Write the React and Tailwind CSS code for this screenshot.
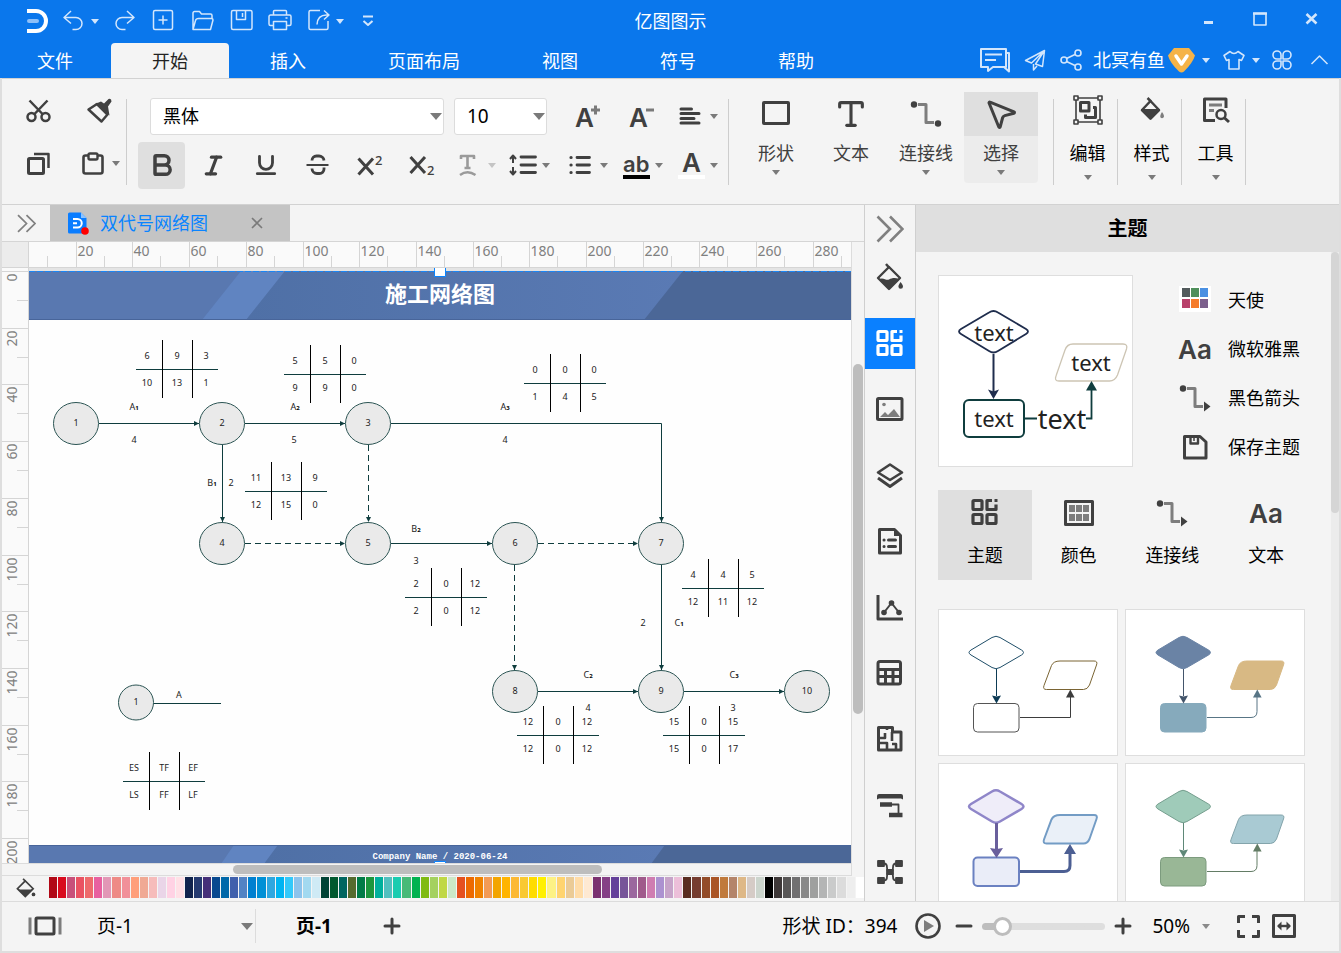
import React, { useState } from 'react';
import {
  Bold,
  Italic,
  Underline,
  Type,
  MousePointer2,
  Minus,
  Plus
} from 'lucide-react';

const Icon = ({ w = 24, h = 24, sw = 2, className = '', children }) => (
  <svg
    width={w}
    height={h}
    viewBox={`0 0 ${w} ${h}`}
    fill="none"
    stroke="currentColor"
    strokeWidth={sw}
    strokeLinejoin="round"
    className={`shrink-0 overflow-visible ${className}`}
    aria-hidden="true"
  >
    {children}
  </svg>
);

const Caret = ({ className = 'text-[#7a7a7a]' }) => (
  <Icon w={8} h={5} className={className}>
    <path d="M0 0h8L4 5z" fill="currentColor" stroke="none" />
  </Icon>
);

const BigCaret = ({ className = '' }) => (
  <Icon w={12} h={7} className={`text-[#7a7a7a] ${className}`}>
    <path d="M0 0h12L6 7z" fill="currentColor" stroke="none" />
  </Icon>
);

/* ---------- shared icons ---------- */

const BucketIcon = () => (
  <Icon w={28} h={28} sw={2}>
    <path d="M10 0l3 3.500" strokeWidth="2.500" />
    <path d="M13 3L2 14l11 11 11-11z" strokeWidth="2.400" />
    <path d="M3 15c5-2 7 2 10 .5s6-2 10-.5L13 25z" fill="currentColor" stroke="none" />
    <path d="M24.500 18c1.500 2 2.500 3 2.500 4.500a2.300 2.300 0 0 1-4.600 0c0-1.500 1-2.500 2.100-4.500z" fill="currentColor" stroke="none" />
  </Icon>
);

const ThemeIcon = () => (
  <Icon w={28} h={28} sw={3.2}>
    <rect x="2" y="1.500" width="9" height="9" rx="1" />
    <rect x="2" y="15.500" width="9" height="9" rx="1" />
    <rect x="16" y="15.500" width="9" height="9" rx="1" />
    <path d="M21 1.500h-5v9h9v-5" />
    <path d="M23.500 0h3v3h-3z" fill="currentColor" stroke="none" />
  </Icon>
);

const ConnectorIcon = ({ arrow = false }) => (
  <Icon w={32} h={28}>
    <circle cx="4" cy="4.500" r="3.200" fill="currentColor" stroke="none" />
    <path d="M8 4.500h8v18h8" stroke="#7d7d7d" strokeWidth="3" />
    {arrow ? (
      <path d="M25 17.500l6.500 5-6.500 5z" fill="currentColor" stroke="none" />
    ) : (
      <circle cx="28" cy="23.500" r="3.200" fill="currentColor" stroke="none" />
    )}
  </Icon>
);

const AaIcon = () => (
  <Icon w={32} h={26}>
    <text x="-1" y="23" fill="currentColor" stroke="none" className="font-['Inter',sans-serif] text-[26px] font-semibold">
      Aa
    </text>
  </Icon>
);

const ChevronsIcon = ({ size = 28 }) => (
  <svg width={size} height={size} viewBox="0 0 28 28" fill="none" stroke="#808080" strokeWidth="2.600">
    <path d="M1.500 1.500L14 14 1.500 26.500M14 1.500L26.500 14 14 26.500" />
  </svg>
);

/* ---------- title bar ---------- */

const QuickAccess = () => (
  <div className="flex h-[42px] items-center pl-[26px] text-[#d3e6fc]">
    <Icon w={24} h={26}>
      <path d="M1 3h9a10 10 0 0 1 0 20H1" stroke="#fff" strokeWidth="4" />
      <path d="M3 13h8" stroke="#8fc0f8" strokeWidth="4" strokeLinecap="round" />
    </Icon>
    <button type="button" aria-label="撤销" className="ml-[11px] flex items-center gap-[6px]">
      <Icon sw={1.5}>
        <path d="M10 2L3 8.500l7 6M3.500 8.500H15a6 6 0 0 1 0 12h-3.500" />
      </Icon>
      <Caret className="text-[#d3e6fc]" />
    </button>
    <button type="button" aria-label="重做" className="ml-[14px]">
      <Icon sw={1.5}>
        <path d="M14 2l7 6.500-7 6M20.500 8.500H9a6 6 0 0 0 0 12h3.500" />
      </Icon>
    </button>
    <div className="ml-[14px] flex items-center gap-[15px]">
      <button type="button" aria-label="新建">
        <Icon sw={1.5}>
          <rect x="2.500" y="1.500" width="19" height="19" rx="1.500" />
          <path d="M12 6.500v9M7.500 11h9" />
        </Icon>
      </button>
      <button type="button" aria-label="打开">
        <Icon sw={1.5}>
          <path d="M3 20.500V4a1.500 1.500 0 0 1 1.500-1.500h5l2 2.500h9a1.500 1.500 0 0 1 1.500 1.500v3M3 20.500h17.500l2.500-9.500q0-1.500-1.500-1.500H8.500q-2.500 0-3 2z" />
        </Icon>
      </button>
      <button type="button" aria-label="保存">
        <Icon sw={1.5}>
          <path d="M4 1.500h17.500a1.500 1.500 0 0 1 1.500 1.500v16a1.500 1.500 0 0 1-1.500 1.500H4A1.500 1.500 0 0 1 2.500 19V3A1.500 1.500 0 0 1 4 1.500zM7.500 2v8.500h9V2M13.500 4v4" />
        </Icon>
      </button>
      <button type="button" aria-label="打印">
        <Icon sw={1.5}>
          <path d="M5.500 6V2.500a1 1 0 0 1 1-1h11a1 1 0 0 1 1 1V6M5.500 16.500H2.500a1.500 1.500 0 0 1-1.500-1.500V7.500A1.500 1.500 0 0 1 2.500 6h19A1.500 1.500 0 0 1 23 7.500v7.500a1.500 1.500 0 0 1-1.500 1.500h-3M5.500 12.500h13v8h-13zM17.500 9h2" />
        </Icon>
      </button>
      <button type="button" aria-label="导出" className="flex items-center gap-[5px]">
        <Icon sw={1.5}>
          <path d="M13 1.500H3.500A1.500 1.500 0 0 0 2 3v16a1.500 1.500 0 0 0 1.500 1.500h16a1.500 1.500 0 0 0 1.500-1.500V12M17 1.500L22 6l-5 4.500M21.500 6h-2q-9 0-9.500 9.500" />
        </Icon>
        <Caret className="text-[#d3e6fc]" />
      </button>
    </div>
    <button type="button" aria-label="更多" className="ml-[18px]">
      <Icon w={12} h={12} sw={2}>
        <path d="M1 1.500h10M1.500 6L6 10l4.500-4" />
      </Icon>
    </button>
  </div>
);

const menuTabs = ['插入', '页面布局', '视图', '符号', '帮助'];

const Header = () => (
  <header className="bg-[#0a77ec] text-white">
    <div className="grid grid-cols-[1fr_auto_1fr] items-center">
      <QuickAccess />
      <h1 className="text-lg">亿图图示</h1>
      <div className="flex items-center justify-end gap-[38px] pr-[23px] pb-1 text-[#d3e6fc]">
        <button type="button" aria-label="最小化">
          <Icon w={13} h={14}>
            <path d="M2 10.500h9" strokeWidth="3" />
          </Icon>
        </button>
        <button type="button" aria-label="最大化">
          <Icon w={14} h={14}>
            <path d="M1 1.500h12v11.500H1z" strokeWidth="1.600" />
            <path d="M0 1.500h14" strokeWidth="2.500" />
          </Icon>
        </button>
        <button type="button" aria-label="关闭">
          <Icon w={13} h={14}>
            <path d="M1.500 2l10 9.500M11.500 2l-10 9.500" strokeWidth="2.600" />
          </Icon>
        </button>
      </div>
    </div>
    <div className="flex h-9 items-end justify-between">
      <nav className="flex text-lg">
        <button type="button" className="h-[35px] w-[111px] px-[37px] text-left">文件</button>
        <button type="button" className="h-[35px] rounded-t-sm bg-[#f4f4f4] px-[41px] text-[#222]">开始</button>
        {menuTabs.map((tab) => (
          <button type="button" key={tab} className="h-[35px] px-[41px]">{tab}</button>
        ))}
      </nav>
      <div className="flex h-9 items-center pr-[13px] text-[#d3e6fc]">
        <button type="button" aria-label="消息">
          <Icon w={31} h={26}>
            <path d="M2 2h25v18H14l-5 4v-4H2z" />
            <path d="M27 6h3v18.500l-5-4.500M6 7.500h17M6 13h11" />
          </Icon>
        </button>
        <button type="button" aria-label="发送" className="ml-[14px]">
          <Icon w={22} h={22} sw={1.5}>
            <path d="M20.500 1.500L1.500 11.500l6 2.500L20.500 1.500l-2 16-7-2.500L20.500 1.500M9.500 15v6l3.500-4" />
          </Icon>
        </button>
        <button type="button" aria-label="分享" className="ml-[14px]">
          <Icon w={22} h={22} sw={1.6}>
            <circle cx="4" cy="11" r="3" />
            <circle cx="18" cy="4" r="3" />
            <circle cx="18" cy="18" r="3" />
            <path d="M6.500 9.500L15 5.500M6.500 12.500L15 16.500" />
          </Icon>
        </button>
        <button type="button" className="ml-[11px] flex items-center gap-[3px] text-lg text-white">
          北冥有鱼
          <Icon w={27} h={25}>
            <path d="M6 0h15l6 7.500q-2 7-11 16-2.500 2-5 0Q2 15 0 7.500z" fill="#f5b348" stroke="none" />
            <path d="M8 8l5.500 8L19 8" stroke="#fff" strokeWidth="3.500" strokeLinecap="round" />
          </Icon>
          <span className="pl-1"><Caret className="text-[#d3e6fc]" /></span>
        </button>
        <button type="button" aria-label="皮肤" className="ml-[13px] flex items-center gap-[7px]">
          <Icon w={22} h={20} sw={1.6}>
            <path d="M7 1.500q4 4 8 0l6 4-2.500 5-2.500-1V19H6V9.500l-2.500 1-2.500-5z" />
          </Icon>
          <Caret className="text-[#d3e6fc]" />
        </button>
        <button type="button" aria-label="应用" className="ml-[12px]">
          <Icon w={20} h={20} sw={1.6}>
            <path d="M9 9H5a4 4 0 1 1 4-4zM11 9h4a4 4 0 1 0-4-4zM9 11H5a4 4 0 1 0 4 4zM11 11h4a4 4 0 1 1-4 4z" />
          </Icon>
        </button>
        <button type="button" aria-label="收起" className="ml-[19px]">
          <Icon w={17} h={10} sw={1.5}>
            <path d="M.5 9l8-8 8 8" />
          </Icon>
        </button>
      </div>
    </div>
  </header>
);

/* ---------- ribbon ---------- */

const Divider = () => <div className="h-[86px] w-px shrink-0 bg-[#cdcdcd]" />;

const ClipboardGroup = () => (
  <div className="grid h-[86px] w-[124px] shrink-0 grid-cols-[60px_auto] content-between pb-2 pl-6">
    <button type="button" aria-label="剪切">
      <Icon w={25} h={26}>
        <circle cx="5.500" cy="18" r="4" strokeWidth="2.500" />
        <circle cx="19.500" cy="18" r="4" strokeWidth="2.500" />
        <path d="M3.500 1.500L16.500 15M21.500 1.500L8.500 15" strokeWidth="2.500" />
      </Icon>
    </button>
    <button type="button" aria-label="格式刷">
      <Icon w={26} h={26}>
        <path d="M2.500 10.500L11 5 21.500 15.500 15.500 22.500z" strokeWidth="2.500" />
        <path d="M9 5l6-2.500 3 2L22.500 0q3-1 3 2.500L22 7.500l1.500 9z" fill="currentColor" stroke="none" />
      </Icon>
    </button>
    <button type="button" aria-label="复制">
      <Icon w={25} h={26} sw={3}>
        <rect x="2.500" y="7.500" width="15" height="15" rx="1" />
        <path d="M8 3h14.500v14" strokeWidth="2.500" />
      </Icon>
    </button>
    <button type="button" aria-label="粘贴" className="-ml-1 flex items-center gap-2">
      <Icon w={22} h={26}>
        <rect x="1.500" y="4.500" width="19" height="18" rx="2" strokeWidth="2.600" />
        <rect x="6.500" y="2.500" width="9" height="6" rx="1.500" fill="#f4f4f4" strokeWidth="2.400" />
      </Icon>
      <Caret />
    </button>
  </div>
);

const SelectBox = ({ label, className, value, options, onChange }) => (
  <div className={`relative ${className}`}>
    <select
      aria-label={label}
      value={value}
      onChange={(e) => onChange(e.target.value)}
      className="h-[37px] w-full appearance-none rounded-[3px] border border-[#dcdcdc] bg-white pl-3 text-black"
    >
      {options.map((opt) => (
        <option key={opt}>{opt}</option>
      ))}
    </select>
    <span className="pointer-events-none absolute top-[15px] right-[2px]">
      <BigCaret />
    </span>
  </div>
);

const FormatButton = ({ label, active, children }) => (
  <button
    type="button"
    aria-label={label}
    className={`flex size-[47px] items-center justify-center rounded-sm ${active ? 'bg-[#dfdfdf]' : ''}`}
  >
    {children}
  </button>
);

const FontGroup = () => {
  const [font, setFont] = useState('黑体');
  const [size, setSize] = useState('10');

  return (
    <div className="h-[100px] w-[601px] shrink-0 pl-[11px]">
      <div className="flex h-[49px] items-center pl-3">
        <SelectBox label="字体" className="w-[294px] text-lg" value={font} options={['黑体', '宋体']} onChange={setFont} />
        <SelectBox label="字号" className="ml-[10px] w-[93px] text-[19px]" value={size} options={['10', '12', '14']} onChange={setSize} />
        <button type="button" aria-label="增大字号" className="ml-7">
          <Icon w={25} h={24}>
            <text x="0" y="23" fill="currentColor" stroke="none" className="font-['Inter',sans-serif] text-[26px] font-semibold">A</text>
            <path d="M16 6h9M20.500 1.500v9" stroke="#7a7a7a" strokeWidth="3" />
          </Icon>
        </button>
        <button type="button" aria-label="减小字号" className="ml-[29px]">
          <Icon w={25} h={24}>
            <text x="0" y="23" fill="currentColor" stroke="none" className="font-['Inter',sans-serif] text-[26px] font-semibold">A</text>
            <path d="M17 6h8" stroke="#7a7a7a" strokeWidth="3" />
          </Icon>
        </button>
        <button type="button" aria-label="对齐" className="ml-[25px] flex items-center gap-[9px]">
          <Icon w={22} h={20}>
            <path d="M2 3h10.500M2 7.500h18M2 12.500h13M2 17h18" strokeWidth="3" strokeLinecap="round" />
          </Icon>
          <Caret />
        </button>
      </div>
      <div className="flex h-[49px] items-center">
        <div className="flex gap-[5px]">
          <FormatButton label="加粗" active><Bold size={28} strokeWidth={3} /></FormatButton>
          <FormatButton label="斜体"><Italic size={25} strokeWidth={3} /></FormatButton>
          <FormatButton label="下划线"><Underline size={26} strokeWidth={2.6} /></FormatButton>
          <FormatButton label="删除线">
            <Icon w={24} h={24}>
              <path d="M18 7.500A5 5 0 0 0 13 3h-2.500a4.500 4.500 0 0 0-4.500 4.500M6 15.500A5 5 0 0 0 11 20.500h2.500a4.500 4.500 0 0 0 4.500-4.500v-1.500" strokeWidth="2.800" />
              <path d="M.5 12h22" />
            </Icon>
          </FormatButton>
          <FormatButton label="上标">
            <Icon w={25} h={24}>
              <path d="M1.500 5.500l14.500 16M16 5.500l-14.500 16" strokeWidth="3" />
              <text x="18" y="12" fill="currentColor" stroke="none" className="text-[13px] font-medium">2</text>
            </Icon>
          </FormatButton>
          <FormatButton label="下标">
            <Icon w={25} h={24}>
              <path d="M1.500 4l14.500 16M16 4l-14.500 16" strokeWidth="3" />
              <text x="18" y="22" fill="currentColor" stroke="none" className="text-[13px] font-medium">2</text>
            </Icon>
          </FormatButton>
        </div>
        <button type="button" aria-label="文字效果" className="flex w-[51px] items-center justify-end gap-[10px] text-[#9a9a9a]">
          <Icon w={20} h={24}>
            <path d="M3 6V3h13v3M9.500 3v12M6.500 15h6" strokeWidth="2.600" />
            <path d="M2 22q7.500-5.500 15.500 0" strokeWidth="2.400" />
          </Icon>
          <Caret className="text-[#c4c4c4]" />
        </button>
        <button type="button" aria-label="行距" className="flex w-[54px] items-center justify-end gap-[5px]">
          <Icon w={28} h={22}>
            <path d="M12 3h14.500M12 11h14.500M12 18.500h14.500" strokeWidth="2.800" strokeLinecap="round" />
            <path d="M4 9V2M1 5l3-3.500L7 5M4 13v7M1 17l3 3.500L7 17" strokeWidth="2" />
          </Icon>
          <Caret />
        </button>
        <button type="button" aria-label="项目符号" className="flex w-[58px] items-center justify-end gap-[9px]">
          <Icon w={22} h={22}>
            <path d="M8 3.500h12.500M8 11h12.500M8 18.500h12.500" strokeWidth="2.800" strokeLinecap="round" />
            <path d="M2 3.500h.1M2 11h.1M2 18.500h.1" strokeWidth="3.200" strokeLinecap="round" />
          </Icon>
          <Caret />
        </button>
        <button type="button" aria-label="突出显示" className="flex w-[55px] items-center justify-end gap-[5px]">
          <Icon w={27} h={26}>
            <text x="0" y="20" fill="currentColor" stroke="none" className="font-['Inter',sans-serif] text-[22px] font-semibold">ab</text>
            <path d="M0 25h27" stroke="#000" strokeWidth="4" />
          </Icon>
          <Caret />
        </button>
        <button type="button" aria-label="字体颜色" className="flex w-[55px] items-center justify-end gap-[5px]">
          <Icon w={27} h={26}>
            <text x="4" y="20" fill="currentColor" stroke="none" className="font-['Inter',sans-serif] text-[26px] font-semibold">A</text>
            <path d="M0 25h27" stroke="#fff" strokeWidth="4" />
          </Icon>
          <Caret />
        </button>
      </div>
    </div>
  );
};

const tools = [
  {
    label: '形状',
    caret: true,
    icon: (
      <Icon w={28} h={28}>
        <rect x="1.500" y="2.500" width="25" height="21" rx=".5" strokeWidth="3" />
      </Icon>
    )
  },
  { label: '文本', icon: <Type size={34} strokeWidth={2.2} /> },
  { label: '连接线', caret: true, icon: <ConnectorIcon /> },
  { label: '选择', caret: true, active: true, icon: <MousePointer2 size={36} strokeWidth={2} /> }
];

const sections = [
  {
    label: '编辑',
    icon: (
      <Icon w={30} h={30} sw={1.6}>
        <path d="M3 3h24v24H3z" />
        <path d="M1 1h4v4H1zM25 1h4v4h-4zM1 25h4v4H1zM25 25h4v4h-4z" fill="#f4f4f4" />
        <path d="M7.500 7.500h8.500v8.500H7.500z" strokeWidth="3" />
        <path d="M20 12.500h2.500V22.500H12.500v-3" strokeWidth="3" />
      </Icon>
    )
  },
  {
    label: '样式',
    icon: (
      <Icon w={24} h={28}>
        <path d="M7.500 2l3.500 3.500" strokeWidth="2.500" />
        <path d="M10.500 5L2 14l8.500 8.500L19 14z" strokeWidth="2.500" />
        <path d="M2 14h17l-8.500 8.500z" fill="currentColor" />
        <path d="M22 16q3 4 1.500 5.500t-3 0Q19.500 20 22 16z" fill="#7d7d7d" stroke="none" />
      </Icon>
    )
  },
  {
    label: '工具',
    icon: (
      <Icon w={28} h={28} sw={3}>
        <path d="M13 24.500H2.500V3h21.500v9" />
        <path d="M7 9h13M7 14.500h5" stroke="#7d7d7d" />
        <circle cx="19" cy="18.500" r="4.500" strokeWidth="2.500" />
        <path d="M22 21.500l5 4.500" />
      </Icon>
    )
  }
];

const Ribbon = () => (
  <div className="flex h-[127px] shrink-0 items-center overflow-hidden border-y border-[#d2d2d2] bg-[#f4f4f4] text-[#404040]">
    <ClipboardGroup />
    <Divider />
    <FontGroup />
    <Divider />
    <div className="flex gap-px pr-[15px] pb-2 pl-[10px]">
      {tools.map((tool) => (
        <button
          type="button"
          key={tool.label}
          className={`flex h-[91px] w-[74px] flex-col items-center rounded-sm ${tool.active ? 'bg-[#ececec]' : ''}`}
        >
          <span className={`flex h-11 w-full items-center justify-center ${tool.active ? 'bg-[#dfdfdf]' : ''}`}>
            {tool.icon}
          </span>
          <span className="text-lg leading-[34px]">{tool.label}</span>
          {tool.caret && <Caret />}
        </button>
      ))}
    </div>
    <Divider />
    {sections.map((section) => (
      <React.Fragment key={section.label}>
        <button type="button" className="flex h-[99px] w-[63px] shrink-0 flex-col items-center pb-2 pl-1 text-black">
          <span className="flex h-9 items-center text-[#404040]">{section.icon}</span>
          <span className="pt-2 text-lg leading-[34px]">{section.label}</span>
          <span className="pt-[5px]"><Caret /></span>
        </button>
        <Divider />
      </React.Fragment>
    ))}
  </div>
);

/* ---------- document area ---------- */

const marks = Array.from({ length: 15 }, (_, i) => i * 20);
const PITCH = 56.7;

const TopRuler = () => (
  <svg className="h-[25px] min-w-0 flex-1 bg-[#fafafa]" stroke="#d5d5d5">
    {marks.map((m, i) => {
      const x = Math.round(-10 + i * PITCH) + 0.5;
      return (
        <g key={m}>
          <path d={`M${x} 0v25M${Math.round(x + 27)}.5 14v11`} fill="none" />
          <text x={x + 1} y="14" stroke="none" fill="#808080" className="text-sm">{m}</text>
        </g>
      );
    })}
  </svg>
);

const SideRuler = () => (
  <svg className="h-full w-[27px] shrink-0 border-r border-[#d5d5d5] bg-[#fafafa]" stroke="#d5d5d5">
    {marks.slice(0, 11).map((m, i) => {
      const y = Math.round(3 + i * PITCH) + 0.5;
      return (
        <g key={m}>
          <path d={`M0 ${y}h27M15 ${Math.round(y + 28)}.5h12`} fill="none" />
          <text
            x="15"
            y={y + 2}
            transform={`rotate(-90 15 ${y + 2})`}
            textAnchor="end"
            stroke="none"
            fill="#808080"
            className="text-sm"
          >
            {m}
          </text>
        </g>
      );
    })}
  </svg>
);

const nodes = [
  [76, 423, '1'],
  [222, 423, '2'],
  [368, 423, '3'],
  [222, 543, '4'],
  [368, 543, '5'],
  [515, 543, '6'],
  [661, 543, '7'],
  [515, 691, '8'],
  [661, 691, '9'],
  [807, 691, '10']
];

const edges = [
  ['M99 423.500H199'],
  ['M245 423.500H345'],
  ['M391 423.500H661.500V522'],
  ['M222.500 445V522'],
  ['M368.500 445V522', true],
  ['M245 543.500H345', true],
  ['M391 543.500H492'],
  ['M538 543.500H638', true],
  ['M514.500 565V670', true],
  ['M661.500 565V670'],
  ['M538 691.500H638'],
  ['M684 691.500H784']
];

// x of the first upright, y of the crossbar, six cell values
const timeTables = [
  [162, 369, ['6', '9', '3', '10', '13', '1']],
  [310, 374, ['5', '5', '0', '9', '9', '0']],
  [550, 383, ['0', '0', '0', '1', '4', '5']],
  [271, 491, ['11', '13', '9', '12', '15', '0']],
  [431, 597, ['2', '0', '12', '2', '0', '12']],
  [708, 588, ['4', '4', '5', '12', '11', '12']],
  [543, 735, ['12', '0', '12', '12', '0', '12']],
  [689, 735, ['15', '0', '15', '15', '0', '17']],
  [149, 781, ['ES', 'TF', 'EF', 'LS', 'FF', 'LF']]
];

const labels = [
  [134, 410, 'A', '1'],
  [134, 443, '4'],
  [295, 410, 'A', '2'],
  [294, 443, '5'],
  [505, 410, 'A', '3'],
  [505, 443, '4'],
  [212, 486, 'B', '1'],
  [231, 486, '2'],
  [416, 532, 'B', '2'],
  [416, 564, '3'],
  [643, 626, '2'],
  [679, 626, 'C', '1'],
  [588, 678, 'C', '2'],
  [588, 711, '4'],
  [734, 678, 'C', '3'],
  [733, 711, '3'],
  [179, 698, 'A']
];

const columnShift = [-15, 15, 44];

const Diagram = () => (
  <svg
    width="822"
    height="596"
    viewBox="29 268 822 596"
    className="max-w-none shrink-0 text-[9px]"
    textAnchor="middle"
    fill="#222"
  >
    <defs>
      <linearGradient id="band" x1="0" x2="1">
        <stop offset="0" stopColor="#4f70a6" />
        <stop offset="1" stopColor="#5a7ab4" />
      </linearGradient>
      <marker id="tip" viewBox="0 0 6 6" refX="6" refY="3" markerWidth="5" markerHeight="5" orient="auto">
        <path d="M0 0L6 3 0 6z" fill="#0f3d3e" />
      </marker>
    </defs>

    <path d="M29 268h822v3H29z" fill="#e4e4e4" />
    <path d="M29 271h822v593H29z" fill="#fefefe" />

    {/* title band */}
    <path d="M29 271h822v49H29z" fill="#5978b0" />
    <path d="M241 271h44l-39 49h-44z" fill="#6084c1" />
    <path d="M285 271h398l-39 49H246z" fill="url(#band)" />
    <path d="M683 271h168v49H644z" fill="#4b6797" />
    <path d="M29 319.500h822" stroke="#48659a" />
    <path d="M29 271.500h822" stroke="#1a86f5" strokeDasharray="6 2" />
    <text x="440" y="302" fill="#fff" className="text-[22px] font-bold">施工网络图</text>

    {/* footer band */}
    <path d="M29 845h822v19H29z" fill="#5978b0" />
    <path d="M234 845h44l-14 19h-43z" fill="#6084c1" />
    <path d="M278 845h387l-14 19H264z" fill="url(#band)" />
    <path d="M665 845h186v19H651z" fill="#4b6797" />
    <path d="M29 845.500h822" stroke="#48659a" />
    <text x="440" y="859" fill="#fff" className="font-['Liberation_Mono',monospace] text-[9px] font-bold">
      Company Name / 2020-06-24
    </text>

    {/* selection handles */}
    <path d="M434.500 267.500h11v9h-11zM434.500 861.500h11v9h-11z" fill="#fff" stroke="#0a84ff" />

    {edges.map(([d, dashed]) => (
      <path
        key={d}
        d={d}
        fill="none"
        stroke="#0f3d3e"
        strokeDasharray={dashed ? '6 4' : undefined}
        markerEnd="url(#tip)"
      />
    ))}

    {nodes.map(([x, y, text]) => (
      <g key={text}>
        <ellipse cx={x} cy={y + 0.5} rx="22.500" ry="21" fill="#eaeaea" stroke="#2c5554" />
        <text x={x} y={y + 3}>{text}</text>
      </g>
    ))}

    {/* legend */}
    <path d="M153 703.500h68" stroke="#0f3d3e" />
    <circle cx="136" cy="702.500" r="17.500" fill="#eaeaea" stroke="#2c5554" />
    <text x="136" y="705">1</text>

    {timeTables.map(([x, y, cells]) => (
      <g key={`${x}-${y}`}>
        <path d={`M${x - 26} ${y}.5h82`} stroke="#0f3d3e" />
        <path d={`M${x}.5 ${y - 29}v58M${x + 30}.5 ${y - 29}v58`} stroke="#000" />
        {cells.map((cell, i) => (
          <text key={i} x={x + columnShift[i % 3]} y={i < 3 ? y - 10 : y + 17}>{cell}</text>
        ))}
      </g>
    ))}

    {labels.map(([x, y, text, sub]) => (
      <text key={`${x}-${y}`} x={x} y={y}>
        {text}
        {sub && <tspan className="text-[6px] font-bold" fill="#000">{sub}</tspan>}
      </text>
    ))}
  </svg>
);

const palette = [
  '#b10816', '#d90a1e', '#c8507a', '#ea5262', '#ee6a6c', '#e8609f', '#e297b6', '#ee8a86', '#f19099', '#ff9f7b',
  '#f0a994', '#f6bcbb', '#ead5e8', '#ffd2e4', '#ffe0e6', '#11234d', '#253a70', '#452f79', '#08488f', '#0068a9',
  '#4060ac', '#5283c4', '#0080d0', '#0090d6', '#2ea7e0', '#00b4f2', '#33c9fa', '#8cc3ec', '#a2d9f0', '#cfeaf5',
  '#014335', '#00582e', '#006660', '#566b2e', '#007b47', '#1c963d', '#00b09c', '#52c0bf', '#1accb0', '#48ba78',
  '#00b250', '#80bb12', '#a4d15f', '#c0d845', '#cce8c8', '#e5501f', '#ed6a00', '#f08200', '#f39b55', '#f3a500',
  '#ffb400', '#fcb934', '#f9c932', '#ffdc00', '#fff000', '#fdf285', '#ffd470', '#ebcb96', '#ffdca8', '#fee9d2',
  '#7b3170', '#854086', '#64409a', '#775499', '#9b689e', '#a05a8b', '#cf7db1', '#ac92d0', '#c7a4c9', '#ecbfd9',
  '#592c20', '#763d30', '#934c29', '#aa5526', '#c07a3c', '#b4856b', '#deb887', '#d5cbc6', '#ccd5cd', '#000000',
  '#3e3838', '#595757', '#717071', '#898989', '#9fa09f', '#b4b5b5', '#cacbcb', '#dcdcdc', '#eeeeee', '#ffffff'
];

const Workspace = () => (
  <main className="flex min-w-0 flex-1 flex-col">
    <div className="flex h-[37px] shrink-0 items-stretch border-b border-[#d5d5d5]">
      <button type="button" aria-label="展开符号库" className="flex w-12 items-center justify-center">
        <ChevronsIcon size={19} />
      </button>
      <div className="flex w-60 items-center bg-[#c4c4c4] pl-[17px]">
        <Icon w={22} h={24}>
          <path d="M1 3a1.500 1.500 0 0 1 1.500-1.500H14l5.500 5.500v14.500a1 1 0 0 1-1 1h-16A1.500 1.500 0 0 1 1 21z" fill="#0a7dff" stroke="none" />
          <path d="M14 1.500V7h5.500z" fill="#8ec4ff" stroke="none" />
          <path d="M6 8h4.500a4 4 0 0 1 0 8.500H6M6 12.200h4" stroke="#fff" strokeWidth="2" />
          <circle cx="18" cy="20" r="3.800" fill="#f00" stroke="none" />
        </Icon>
        <span className="pl-[11px] text-lg text-[#0a84ff]">双代号网络图</span>
        <button type="button" aria-label="关闭文档" className="ml-[43px] text-[#7a7a7a]">
          <Icon w={12} h={12} sw={1.6}>
            <path d="M1 1l10 10M11 1L1 11" />
          </Icon>
        </button>
      </div>
    </div>

    <div className="flex min-h-0 flex-1">
      <div className="flex min-w-0 flex-1 flex-col">
        <div className="flex border-b border-[#d5d5d5]">
          <div className="w-[27px] shrink-0 border-r border-[#d5d5d5] bg-[#ececec]" />
          <TopRuler />
        </div>
        <div className="flex min-h-0 flex-1 overflow-hidden">
          <SideRuler />
          <div className="min-w-0 flex-1 overflow-hidden bg-[#e4e4e4]">
            <Diagram />
          </div>
        </div>
        <div className="h-[13px] shrink-0 border-y border-[#dcdcdc] pt-px pl-[231px]">
          <div className="h-[9px] w-[369px] rounded-full bg-[#bdbdbd]" />
        </div>
      </div>
      <div className="w-[13px] border-l border-[#dcdcdc] pt-[122px] pl-px">
        <div className="h-[350px] w-[10px] rounded-full bg-[#bdbdbd]" />
      </div>
    </div>

    <div className="flex h-[25px] shrink-0 items-center pb-[2px]">
      <span className="flex w-[47px] justify-center text-[#404040]">
        <svg width="20" height="20" viewBox="0 0 28 28" fill="none" stroke="currentColor" aria-hidden="true">
          <path d="M10 1l3 3.500" strokeWidth="2.500" />
          <path d="M13 4L2 15l11 11 11-11z" strokeWidth="2.400" />
          <path d="M3 16h20L13 26z" fill="currentColor" stroke="none" />
          <circle cx="24.500" cy="23" r="2.600" fill="currentColor" stroke="none" />
        </svg>
      </span>
      <div className="flex flex-1 gap-px">
        {palette.map((color) => (
          <button
            type="button"
            key={color}
            aria-label={color}
            className="h-[21px] flex-1"
            style={{ backgroundColor: color }}
          />
        ))}
      </div>
    </div>
  </main>
);

/* ---------- right side ---------- */

const sideTools = [
  { label: '填充', icon: <BucketIcon /> },
  { label: '主题', active: true, icon: <ThemeIcon /> },
  {
    label: '图片',
    icon: (
      <Icon w={28} h={28} sw={3}>
        <rect x="1.500" y="2.500" width="24.500" height="21" rx="1" />
        <circle cx="8" cy="8.500" r="1.800" fill="#7d7d7d" stroke="none" />
        <path d="M4 21l5-5 3 3 6-6 6 8z" fill="#7d7d7d" stroke="none" />
      </Icon>
    )
  },
  {
    label: '图层',
    icon: (
      <Icon w={28} h={28} sw={2.6}>
        <path d="M14 2.500L26 10.500 14 18 2 10.500z" />
        <path d="M2 16l12 8.500L26 16" strokeWidth="3" />
      </Icon>
    )
  },
  {
    label: '文档',
    icon: (
      <Icon w={28} h={28} sw={3}>
        <path d="M3.500 1.500h15l6 6v17.500h-21z" />
        <path d="M18 .5v7.500h7z" fill="currentColor" stroke="none" />
        <path d="M12.500 12h7M12.500 18.500h7" strokeLinecap="round" />
        <path d="M8 12h.1M8 18.500h.1" strokeLinecap="round" />
      </Icon>
    )
  },
  {
    label: '图表',
    icon: (
      <Icon w={28} h={28}>
        <path d="M2 1v24h25" strokeWidth="3" />
        <path d="M8 18.500L15.500 9 23 18.500" />
        <circle cx="8" cy="18.500" r="2.800" fill="currentColor" stroke="none" />
        <circle cx="15.500" cy="9" r="2.800" fill="currentColor" stroke="none" />
        <circle cx="23" cy="18.500" r="2.800" fill="currentColor" stroke="none" />
      </Icon>
    )
  },
  {
    label: '表格',
    icon: (
      <Icon w={28} h={28} sw={3}>
        <rect x="2" y="1.500" width="22.500" height="22.500" rx="2" />
        <path d="M2 9.500h23M2 16.500h23M9.500 9.500V24M17 9.500V24" />
      </Icon>
    )
  },
  {
    label: '平面图',
    icon: (
      <Icon w={28} h={28} sw={3}>
        <path d="M16.500 7V1.500h-14v22.500h22.500V6h-8.500" />
        <path d="M2 12h7V7M11 1.500V4M2 17h9v7M16 12v3M16 6v7M16 18h4v6" strokeWidth="2.600" />
      </Icon>
    )
  },
  {
    label: '时间线',
    icon: (
      <Icon w={28} h={28}>
        <path d="M1 7.500V4q0-2 2-2h22q2 0 2 2v3.500l-2-1H3z" fill="currentColor" stroke="none" />
        <path d="M4 12.500h12" strokeWidth="4.500" />
        <path d="M16 12.500h6.500V22" strokeWidth="1.800" />
        <path d="M13 23h13.500" strokeWidth="4.500" />
      </Icon>
    )
  },
  {
    label: '导图',
    icon: (
      <Icon w={28} h={28} sw={1.8}>
        <path d="M8 5.500q3 0 3 4t3 4.500q3-.5 3-4.500t3-4M8 22.500q3 0 3-4t3-4.500q3 .5 3 4.500t3 4" />
        <path d="M2 3h6v5H2zM20 3h6v5h-6zM2 20h6v5H2zM20 20h6v5h-6zM11 12h6v4h-6z" fill="currentColor" />
      </Icon>
    )
  }
];

const SideToolbar = () => (
  <aside className="flex w-[52px] shrink-0 flex-col overflow-hidden border-x border-[#cfcfcf] text-[#404040]">
    <button type="button" aria-label="收起面板" className="flex h-[47px] shrink-0 items-center justify-center">
      <ChevronsIcon />
    </button>
    <div className="flex flex-col gap-[15px]">
      {sideTools.map((tool) => (
        <button
          type="button"
          key={tool.label}
          aria-label={tool.label}
          className={`flex h-[51px] items-center justify-center ${tool.active ? 'bg-[#0a80ff] text-white' : ''}`}
        >
          {tool.icon}
        </button>
      ))}
    </div>
  </aside>
);

const ThemePreview = () => (
  <svg width="193" height="190" viewBox="1 1 193 190" className="text-[22px]" textAnchor="middle" fill="#222" aria-hidden="true">
    <path d="M51 37.500q4.500-3 9 0L88 54q4 2.500 0 5L60 76q-4.500 3-9 0L23 59q-4-2.500 0-5z" fill="none" stroke="#1f2d4d" strokeWidth="1.800" />
    <path d="M55.500 79v40" stroke="#1f2d4d" strokeWidth="2" />
    <path d="M50 114.500l5.500 2 5.500-2-5.500 9.500z" fill="#1f2d4d" />
    <rect x="26" y="125" width="60" height="37" rx="5" fill="none" stroke="#0f3d3e" strokeWidth="2" />
    <path d="M135 69h50q5 0 3.500 5l-9 26q-2.500 6-8 6H121q-5 0-3-5l9-26q2-6 8-6z" fill="none" stroke="#cdc5b4" strokeWidth="1.300" />
    <path d="M87 143.500h12M148 143.500h5.500V114" fill="none" stroke="#0f3d3e" strokeWidth="1.800" />
    <path d="M148 115.500l5.500-9.500 5.500 9.500z" fill="#0f3d3e" />
    <text x="56" y="66">text</text>
    <text x="153" y="96">text</text>
    <text x="56" y="152">text</text>
    <text x="124" y="154" className="text-[27px]">text</text>
  </svg>
);

const swatchColors = ['#525a5c', '#4f8f5b', '#4a90e2', '#b8406a', '#f57b2a', '#7b5f8c'];

const themeOptions = [
  {
    label: '天使',
    icon: (
      <Icon w={32} h={26}>
        <path d="M0-1h32v26H0z" fill="#fff" stroke="none" />
        {swatchColors.map((color, i) => (
          <rect key={color} x={3 + (i % 3) * 9} y={i < 3 ? 1 : 12} width="8" height="9" fill={color} stroke="none" />
        ))}
      </Icon>
    )
  },
  { label: '微软雅黑', icon: <AaIcon /> },
  { label: '黑色箭头', icon: <ConnectorIcon arrow /> },
  {
    label: '保存主题',
    icon: (
      <Icon w={26} h={26} sw={3}>
        <path d="M2.500 2.500h15.500L24 8v16H2.500z" />
        <path d="M8.500 2.500v7h7.500v-7" strokeWidth="2.400" />
        <path d="M12 4v3" strokeWidth="1.500" />
      </Icon>
    )
  }
];

const panelTabs = [
  { label: '主题', active: true, icon: <ThemeIcon /> },
  {
    label: '颜色',
    icon: (
      <Icon w={30} h={26}>
        <rect x="1.500" y="1.500" width="27" height="23" strokeWidth="3" />
        <path d="M5 5h6v7H5zM12 5h6v7h-6zM19 5h6v7h-6zM5 14h6v7H5zM12 14h6v7h-6zM19 14h6v7h-6z" fill="#7d7d7d" stroke="none" />
      </Icon>
    )
  },
  { label: '连接线', icon: <ConnectorIcon arrow /> },
  { label: '文本', icon: <AaIcon /> }
];

const themes = [
  {
    name: '线条',
    width: 1,
    diamond: ['#fff', '#1f4e68'],
    box: ['#fff', '#555'],
    para: ['#fff', '#7a6433'],
    down: '#0d3b55',
    link: '#3d3d3d',
    square: true
  },
  {
    name: '实色',
    width: 1,
    diamond: ['#6a83a5', '#6a83a5'],
    box: ['#86aabc', '#86aabc'],
    para: ['#d8b984', '#d8b984'],
    down: '#43556b',
    link: '#587585'
  },
  {
    name: '紫蓝',
    width: 2,
    diamond: ['#efedf9', '#8f86c9'],
    box: ['#eaedf8', '#6b81c1'],
    para: ['#eaf0f8', '#739cc5'],
    down: '#695f9c',
    link: '#4c5f93',
    bold: true
  },
  {
    name: '青绿',
    width: 1,
    diamond: ['#9fcbb9', '#759e8e'],
    box: ['#99b796', '#7c9b7e'],
    para: ['#a9cad3', '#83a4ab'],
    down: '#5f8878',
    link: '#637c65'
  }
];

const ThemeCard = ({ theme }) => {
  const stroke = theme.bold ? 3 : 1;
  return (
    <button type="button" aria-label={theme.name} className="h-[147px] border border-[#dedede] bg-white">
      <svg width="178" height="145" viewBox="1 1 178 145" fill="none" aria-hidden="true">
        <path
          d="M54 28.500q4-2.500 8 0l21.500 12.500q4 2.500 0 5L62 58.500q-4 2.500-8 0L33 46q-4-2.500 0-5z"
          fill={theme.diamond[0]}
          stroke={theme.diamond[1]}
          strokeWidth={theme.bold ? 2.5 : theme.width}
        />
        <path
          d="M122 52h34q4 0 2.500 4l-7 20q-2 4.500-6 4.500h-37q-4 0-2.500-4l7.500-20q2-4.500 8.500-4.500z"
          fill={theme.para[0]}
          stroke={theme.para[1]}
          strokeWidth={theme.width}
        />
        <rect x="35.500" y="94.500" width="45.500" height="28.500" rx="4" fill={theme.box[0]} stroke={theme.box[1]} strokeWidth={theme.width} />
        <path d="M58.500 60v27" stroke={theme.down} strokeWidth={stroke} />
        <path d={theme.bold ? 'M52 85l6.500 1 6.500-1-6.500 10z' : 'M54 86.500l4.500 1 4.500-1-4.500 8z'} fill={theme.down} />
        <path
          d={theme.square ? 'M82 108.500h50.500V87' : 'M82 108.500h44q6 0 6-6V87'}
          stroke={theme.link}
          strokeWidth={stroke}
        />
        <path d={theme.bold ? 'M126 91l6-10 6 10z' : 'M128 88.500l4.300-8 4.300 8z'} fill={theme.link} />
      </svg>
    </button>
  );
};

const ThemePanel = () => (
  <section className="flex w-[423px] shrink-0 flex-col">
    <h2 className="flex h-[47px] shrink-0 items-center justify-center bg-[#dfdfdf] text-xl font-bold text-black">主题</h2>
    <div className="flex min-h-0 flex-1 justify-between">
      <div className="ml-[22px] w-[375px] overflow-hidden pt-[23px]">
        <div className="flex">
          <div className="h-48 w-[195px] shrink-0 border border-[#dedede] bg-white">
            <ThemePreview />
          </div>
          <ul className="flex-1 pl-[46px] text-lg text-black">
            {themeOptions.map((option) => (
              <li key={option.label}>
                <button type="button" className="flex h-[49px] items-center gap-[17px]">
                  <span className="flex w-8 justify-center text-[#404040]">{option.icon}</span>
                  {option.label}
                </button>
              </li>
            ))}
          </ul>
        </div>

        <div className="mt-[19px] grid grid-cols-4">
          {panelTabs.map((tab) => (
            <button
              type="button"
              key={tab.label}
              className={`flex h-[90px] flex-col items-center text-lg text-black ${tab.active ? 'bg-[#dfdfdf]' : ''}`}
            >
              <span className="flex h-[46px] items-center text-[#404040]">{tab.icon}</span>
              <span className="leading-[38px]">{tab.label}</span>
            </button>
          ))}
        </div>

        <div className="mt-[29px] grid grid-cols-[180px_180px] gap-[7px]">
          {themes.map((theme) => (
            <ThemeCard key={theme.name} theme={theme} />
          ))}
        </div>
      </div>
      <div className="w-2 bg-[#ececec]">
        <div className="h-[261px] rounded-full bg-[#d5d5d5]" />
      </div>
    </div>
  </section>
);

/* ---------- status bar ---------- */

const StatusBar = () => {
  const [page, setPage] = useState('页-1');
  const [zoom, setZoom] = useState(10);

  return (
    <footer className="flex h-[50px] shrink-0 items-center border-t border-[#dcdcdc] pb-px text-black">
      <button type="button" aria-label="页面视图" className="ml-[26px] text-[#404040]">
        <Icon w={34} h={20}>
          <path d="M2 1.500v17M32 1.500v17" stroke="#7d7d7d" strokeWidth="3" />
          <rect x="8" y="2" width="18" height="16" rx="1" strokeWidth="3" />
        </Icon>
      </button>
      <div className="relative ml-[31px] flex h-[34px] w-[163px] items-center border-r border-[#dcdcdc]">
        <select
          aria-label="页面"
          value={page}
          onChange={(e) => setPage(e.target.value)}
          className="w-full appearance-none bg-transparent pl-1 text-[19px]"
        >
          <option>页-1</option>
        </select>
        <BigCaret className="pointer-events-none absolute right-[2px]" />
      </div>
      <button type="button" className="ml-10 text-[19px] font-bold">页-1</button>
      <button type="button" aria-label="添加页面" className="ml-12 text-[#404040]">
        <Plus size={24} strokeWidth={3} />
      </button>

      <div className="ml-auto flex items-center pr-[43px] text-[#404040]">
        <span className="text-[19px] text-black">形状 ID：394</span>
        <button type="button" aria-label="播放" className="ml-[18px]">
          <Icon w={26} h={26}>
            <circle cx="13" cy="13" r="11.500" strokeWidth="2.600" />
            <path d="M9 7l10 6-10 6z" fill="#7d7d7d" stroke="none" />
          </Icon>
        </button>
        <button type="button" aria-label="缩小" className="ml-[11px]">
          <Minus size={24} strokeWidth={3} />
        </button>
        <input
          type="range"
          aria-label="缩放"
          min="0"
          max="100"
          value={zoom}
          onChange={(e) => setZoom(Number(e.target.value))}
          className="mx-[6px] h-[7px] w-[123px] appearance-none rounded-full bg-linear-to-r from-[#bdbdbd] from-15% to-[#dedede] to-15% [&::-webkit-slider-thumb]:size-[19px] [&::-webkit-slider-thumb]:appearance-none [&::-webkit-slider-thumb]:rounded-full [&::-webkit-slider-thumb]:border-3 [&::-webkit-slider-thumb]:border-[#bdbdbd] [&::-webkit-slider-thumb]:bg-white"
        />
        <button type="button" aria-label="放大">
          <Plus size={24} strokeWidth={3} />
        </button>
        <button type="button" className="ml-[17px] flex items-center gap-3 text-[19px] text-black">
          50%
          <Caret className="text-[#8a8a8a]" />
        </button>
        <button type="button" aria-label="全屏" className="ml-[27px]">
          <Icon w={23} h={23} sw={3}>
            <path d="M1.500 8V1.500H8M15 1.500h6.500V8M21.500 15v6.500H15M8 21.500H1.500V15" />
          </Icon>
        </button>
        <button type="button" aria-label="适应宽度" className="ml-3">
          <Icon w={24} h={24} sw={3}>
            <path d="M1.500 1.500h21v21h-21z" />
            <path d="M6 12h12" strokeWidth="2.400" />
            <path d="M9.500 7.500L5 12l4.500 4.500zM14.500 7.500L19 12l-4.500 4.500z" fill="currentColor" stroke="none" />
          </Icon>
        </button>
      </div>
    </footer>
  );
};

const App = () => (
  <div className="flex h-screen flex-col overflow-hidden bg-[#f4f4f4] font-['Noto_Sans','Noto_Sans_CJK_SC',sans-serif]">
    <Header />
    <div className="flex min-h-0 flex-1 flex-col border-x-2 border-b-2 border-[#dedede]">
      <Ribbon />
      <div className="flex min-h-0 flex-1">
        <Workspace />
        <SideToolbar />
        <ThemePanel />
      </div>
      <StatusBar />
    </div>
  </div>
);

export default App;
